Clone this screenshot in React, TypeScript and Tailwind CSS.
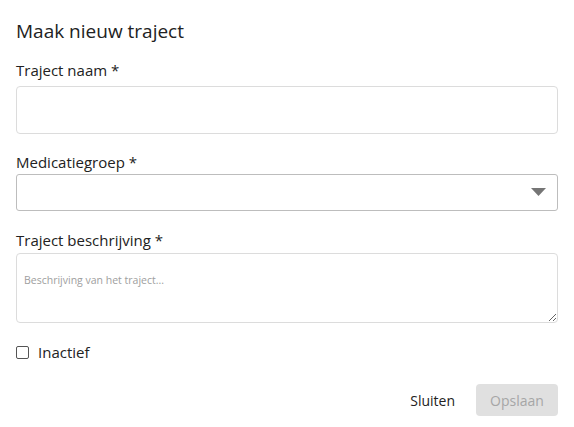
import React, { useState } from 'react';

const App: React.FC = () => {
  const [naam, setNaam] = useState('');
  const [groep, setGroep] = useState('');
  const [beschrijving, setBeschrijving] = useState('');
  const [inactief, setInactief] = useState(false);

  return (
    <div className="w-[574px] h-[427px] bg-white px-4 text-[#222] font-['Open_Sans',sans-serif]">
      <h1 className="pt-[19px] text-[19px] leading-[24px] font-medium">Maak nieuw traject</h1>

      <label className="block mt-[17px] text-[15px] leading-[20px]">Traject naam *</label>
      <input
        value={naam}
        onChange={(e) => setNaam(e.target.value)}
        className="mt-[6px] block w-full h-[48px] border border-[#dcdcdc] rounded-[4px] px-3 outline-none"
      />

      <label className="block mt-[18px] text-[15px] leading-[20px]">Medicatiegroep *</label>
      <div className="relative mt-[2px]">
        <select
          value={groep}
          onChange={(e) => setGroep(e.target.value)}
          className="appearance-none block w-full h-[37px] border border-[#bdbdbd] rounded-[3px] px-3 bg-white outline-none"
        >
          <option value=""></option>
        </select>
        <svg className="absolute right-[12px] top-[14px] pointer-events-none" width="15" height="8" viewBox="0 0 15 8">
          <path d="M0 0 L15 0 L7.5 8 Z" fill="#757575" />
        </svg>
      </div>

      <label className="block mt-[19px] text-[15px] leading-[20px]">Traject beschrijving *</label>
      <textarea
        value={beschrijving}
        onChange={(e) => setBeschrijving(e.target.value)}
        placeholder="Beschrijving van het traject..."
        className="mt-[3px] block w-full h-[70px] border border-[#dcdcdc] rounded-[4px] px-[7px] pt-[19px] text-[10.5px] leading-[14px] placeholder:text-[#9e9e9e] outline-none"
      />

      <label className="flex items-center gap-[9px] mt-[19px] text-[15px] leading-[20px]">
        <input
          type="checkbox"
          checked={inactief}
          onChange={(e) => setInactief(e.target.checked)}
          className="appearance-none w-[13px] h-[13px] border border-[#555] rounded-[2px] bg-white"
        />
        Inactief
      </label>

      <div className="flex justify-end items-center mt-[22px] gap-[21px]">
        <button className="text-[14px] font-medium text-[#222]">Sluiten</button>
        <button disabled className="h-[32px] w-[82px] rounded-[4px] bg-[#e0e0e0] text-[#a6a6a6] text-[14px] font-medium">
          Opslaan
        </button>
      </div>
    </div>
  );
};

export default App;
